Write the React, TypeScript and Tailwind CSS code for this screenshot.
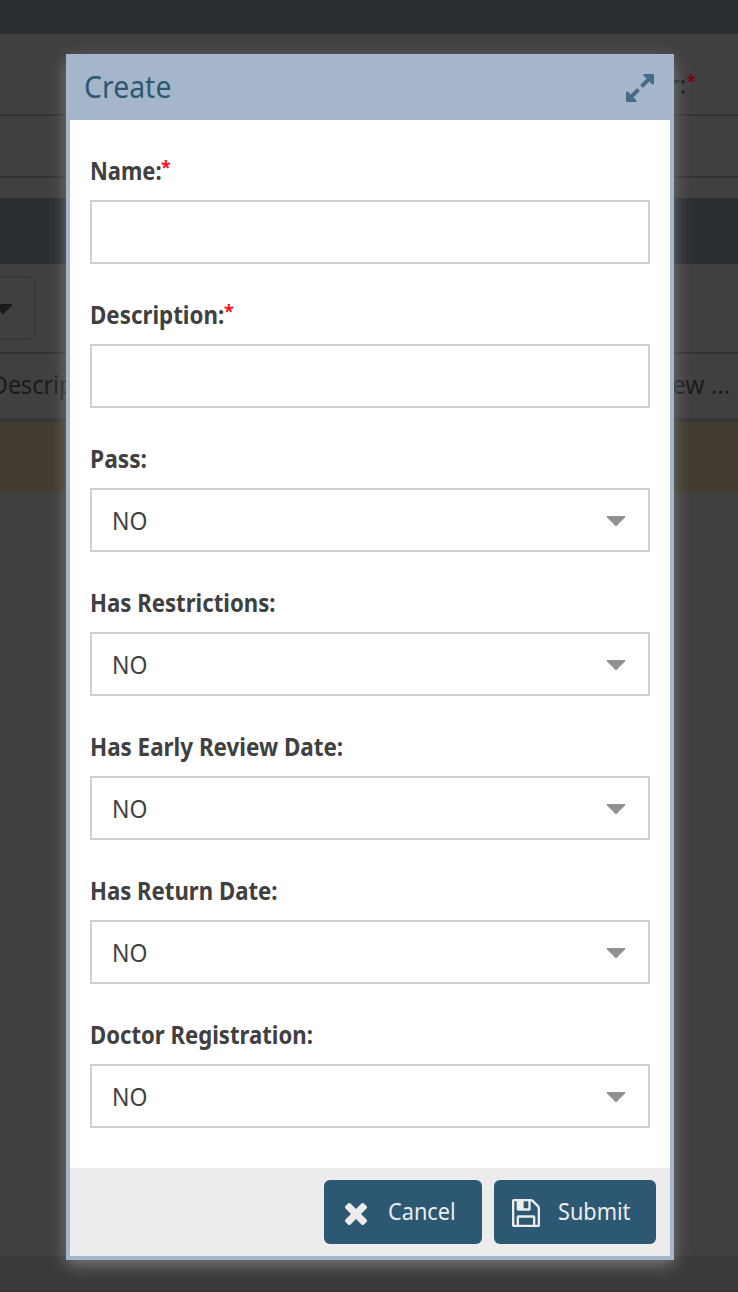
import React from "react";

const caret = "M0 0H18V1.5L10 9.5Q9 10.5 8 9.5L0 1.5Z";

function Caret({ className }: { className: string }) {
  return (
    <svg viewBox="0 0 18 10" className={`h-[10px] w-[18px] shrink-0 ${className}`} fill="currentColor">
      <path d={caret} />
    </svg>
  );
}

function ExpandIcon() {
  return (
    <svg viewBox="128 128 1536 1536" className="mt-[2px] h-7 w-7 text-[#456b88]" fill="currentColor">
      <path d="M883 1056q0 13-10 23l-332 332 144 144q19 19 19 45t-19 45-45 19h-448q-26 0-45-19t-19-45v-448q0-26 19-45t45-19 45 19l144 144 332-332q10-10 23-10t23 10l114 114q10 10 10 23zm781-864v448q0 26-19 45t-45 19-45-19l-144-144-332 332q-10 10-23 10t-23-10l-114-114q-10-10-10-23t10-23l332-332-144-144q-19-19-19-45t19-45 45-19h448q26 0 45 19t19 45z" />
    </svg>
  );
}

function CloseIcon() {
  return (
    <svg viewBox="302 366 1188 1188" className="mt-[3px] h-[22px] w-[22px] shrink-0" fill="currentColor">
      <path d="M1490 1322q0 40-28 68l-136 136q-28 28-68 28t-68-28l-294-294-294 294q-28 28-68 28t-68-28l-136-136q-28-28-28-68t28-68l294-294-294-294q-28-28-28-68t28-68l136-136q28-28 68-28t68 28l294 294 294-294q28-28 68-28t68 28l136 136q28 28 28 68t-28 68l-294 294 294 294q28 28 28 68z" />
    </svg>
  );
}

function SaveIcon() {
  return (
    <svg viewBox="0 128 1536 1536" className="mt-[1px] h-7 w-7 shrink-0" fill="currentColor">
      <path d="M384 1536h768v-384h-768v384zm896 0h128v-896q0-14-10-38.5t-20-34.5l-281-281q-10-10-34-20t-39-10v416q0 40-28 68t-68 28h-576q-40 0-68-28t-28-68v-416h-128v1280h128v-416q0-40 28-68t68-28h832q40 0 68 28t28 68v416zm-384-928v-320q0-13-9.5-22.5t-22.5-9.5h-192q-13 0-22.5 9.5t-9.5 22.5v320q0 13 9.5 22.5t22.5 9.5h192q13 0 22.5-9.5t9.5-22.5zm640 32v928q0 40-28 68t-68 28h-1344q-40 0-68-28t-28-68v-1344q0-40 28-68t68-28h928q40 0 88 20t76 48l280 280q28 28 48 76t20 88z" />
    </svg>
  );
}

const fields = [
  { label: "Name:", required: true, fit: "w-[71px] scale-x-[0.877]" },
  { label: "Description:", required: true, fit: "w-[134px] scale-x-[0.893]" },
  { label: "Pass:", value: "NO", fit: "scale-x-[0.91]" },
  { label: "Has Restrictions:", value: "NO", fit: "scale-x-[0.887]" },
  { label: "Has Early Review Date:", value: "NO", fit: "scale-x-[0.896]" },
  { label: "Has Return Date:", value: "NO", fit: "scale-x-[0.886]" },
  { label: "Doctor Registration:", value: "NO", fit: "scale-x-[0.885]" },
];

function Field({ label, required, value, fit }: { label: string; required?: boolean; value?: string; fit: string }) {
  return (
    <div className="flex flex-col">
      <div className="flex h-12 items-start text-[25px] leading-[37px] font-bold whitespace-nowrap text-[#404040]">
        <span className={`origin-left ${fit}`}>{label}</span>
        {required && <span className="text-[18px] leading-[31px] text-[#ff0f20]">*</span>}
      </div>
      <div className="flex h-16 items-center justify-between border-2 border-[#d0d0d0] bg-white pr-[23px] pl-5 text-[25px] text-[#404040]">
        <span className="mt-[2px] origin-left scale-x-[0.92]">{value}</span>
        {value && <Caret className="mt-[2px] text-[#919191]" />}
      </div>
    </div>
  );
}

function Backdrop() {
  return (
    <div className="flex h-full flex-col bg-[#404040] text-[25px] whitespace-nowrap text-[#1a1a1a]">
      <div className="h-[34px] bg-[#2b2e33]" />
      <div className="flex h-[82px] items-start justify-end border-b-2 border-[#343434] pt-[32px] pr-[42px] leading-[37px]">
        <span className="font-medium">r:</span>
        <span className="text-[18px] leading-[31px] font-bold text-[#780810]">*</span>
      </div>
      <div className="h-[62px] border-b-2 border-[#343434]" />
      <div className="h-5" />
      <div className="h-[66px] bg-[#2b2e33]" />
      <div className="flex h-[90px] items-start border-b-2 border-[#333333] pt-3">
        <div className="flex h-16 w-9 items-center rounded-r-md border-2 border-l-0 border-[#393939]">
          <Caret className="-ml-[6px] mt-[2px] text-[#1a1a1a]" />
        </div>
      </div>
      <div className="flex h-16 items-center justify-between pr-2">
        <span className="-mt-[2px] -ml-[9px] origin-left scale-x-[0.93]">Description</span>
        <span className="-mt-[2px] origin-right scale-x-[0.97]">Review ...</span>
      </div>
      <div className="h-1 bg-[#373737]" />
      <div className="h-[70px] border-b border-[#4a4128] bg-[#403b2e]" />
      <div className="flex-1" />
      <div className="h-9 border-b border-[#332f31] bg-[#3a3a3a]" />
    </div>
  );
}

export default function App() {
  return (
    <div className="relative h-[1292px] w-[738px] overflow-hidden font-['Noto_Sans',sans-serif]">
      <Backdrop />
      <div className="absolute top-[54px] left-[66px] flex h-[1206px] w-[608px] flex-col border-4 border-t-0 border-[#a6b6ca] bg-white shadow-[0_5px_16px_-1px_#808080]">
        <header className="flex h-[66px] shrink-0 items-center justify-between bg-[#a6b6ca] pr-4 pl-[14px] text-[#2d5873]">
          <h1 className="-mt-[2px] origin-left scale-x-[0.917] text-[31px]">Create</h1>
          <ExpandIcon />
        </header>
        <main className="flex flex-1 flex-col gap-8 px-5 pt-8">
          {fields.map((f) => (
            <Field key={f.label} {...f} />
          ))}
        </main>
        <footer className="flex h-[88px] shrink-0 justify-end gap-3 bg-[#ececec] pt-3 pr-[14px] text-[24px] text-[#ececec]">
          <button className="flex h-16 w-[158px] items-center rounded-md bg-[#2d5873] pl-[21px]">
            <CloseIcon />
            <span className="-mt-[2px] ml-[21px] origin-left scale-x-[0.905]">Cancel</span>
          </button>
          <button className="flex h-16 w-[162px] items-center rounded-md bg-[#2d5873] pl-[18px]">
            <SaveIcon />
            <span className="-mt-[2px] ml-[18px] origin-left scale-x-[0.905]">Submit</span>
          </button>
        </footer>
      </div>
    </div>
  );
}
